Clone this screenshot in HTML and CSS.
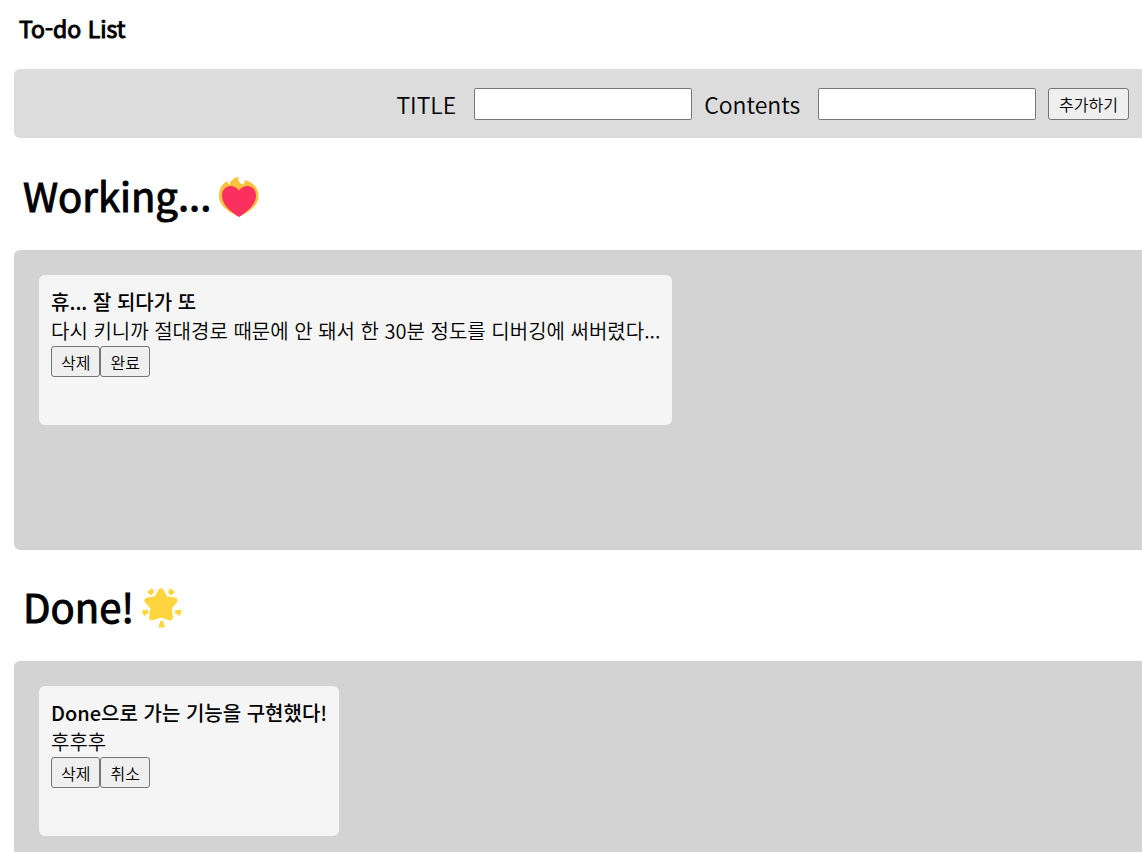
FILE: index.html
```html
<!doctype html>
<html lang="ko">
<head>
    <meta charset="UTF-8">
    <meta name="viewport" content="width=device-width, initial-scale=1.0">
    <link rel="stylesheet" href="styles.css">
    <title>To-do List</title>
</head>
<body>
<header>
    <h1 class="page-title">To-do List</h1>
</header>
<form class="todo-form">
    <label for="title">TITLE</label>
    <input type="text" id="title" name="title">
    <label for="contents">Contents</label>
    <input type="text" id="contents" name="contents">
    <button type="submit" class="add-button">추가하기</button>
</form>
<main>
    <section>
        <h2 class="section-title">
            Working...
            <svg class="emoji" viewBox="0 0 40 40" aria-hidden="true">
                <path fill="#f9c23c" d="M20 39.500C12 36 0 30 0 19C0 11 4 6 8.500 4C8.500 6 9 7 10.500 7.500C11.500 3.500 15 .5 19.500 0C18.500 3.500 20.500 6.500 23.500 7.500C25.500 6.500 26 4.500 25.500 3C33 4.500 39.500 10 39.500 19C39.500 30 28 36 20 39.500Z"/>
                <path fill="#fb305f" d="M20 13.500C22 10.500 25 9 28.500 9C33.500 9 37 13 37 18.500C37 28.500 27 35.500 20 40C13 35.500 3 28.500 3 18.500C3 13 6.500 9 11.500 9C15 9 18 10.500 20 13.500Z"/>
            </svg>
        </h2>
        <div class="todo-list">
            <article class="todo-card">
                <h3>휴... 잘 되다가 또</h3>
                <p>다시 키니까 절대경로 때문에 안 돼서 한 30분 정도를 디버깅에 써버렸다...</p>
                <div class="card-buttons">
                    <button type="button">삭제</button>
                    <button type="button">완료</button>
                </div>
            </article>
        </div>
    </section>
    <section>
        <h2 class="section-title">
            Done!
            <svg class="emoji" viewBox="0 0 40 40" aria-hidden="true">
                <g fill="#ffd53f" stroke="#ffd53f" stroke-linejoin="round">
                    <path stroke-width="6" d="M19 3.500L23 11L32.500 12.500L26.500 19.500L28 29.500L19 26.500L10 29.500L11.500 19.500L5.500 12.500L15 11Z"/>
                    <path stroke-width="1" d="M10 .8L11.500 4.500L9 7L5.500 4ZM28 .8L26.500 4.500L29 7L32.500 4ZM.5 22.500L5.500 22.500L6.500 24.500L2 27.500ZM39 22.500L34 22.500L33 24.500L37.500 27.500ZM19 33H20.500L22.500 39H17Z"/>
                </g>
            </svg>
        </h2>
        <div class="todo-list">
            <article class="todo-card">
                <h3>Done으로 가는 기능을 구현했다!</h3>
                <p>후후후</p>
                <div class="card-buttons">
                    <button type="button">삭제</button>
                    <button type="button">취소</button>
                </div>
            </article>
        </div>
    </section>
</main>
</body>
</html>
```
FILE: styles.css
```css
* {
    box-sizing: border-box;
}

body {
    margin: 0 0 0 14px;
    color: #000;
    font-family: "Noto Sans CJK KR", sans-serif;
    font-size: 20px;
    font-weight: 350;
    line-height: 29px;
}

h1, h2, h3, p {
    margin: 0;
}

h1, h2 {
    font-weight: 400;
    -webkit-text-stroke: 1px #000;
}

.page-title {
    padding: 10px 5px 22px;
    font-size: 23px;
    line-height: 37px;
}

.todo-form {
    display: flex;
    justify-content: flex-end;
    align-items: center;
    margin-bottom: 1px;
    padding: 18px 13px;
    background-color: gainsboro;
    border-radius: 6px 0 0 6px;
    font-size: 23px;
    line-height: 31px;
}

.todo-form label {
    padding-top: 2px;
    margin-right: 18px;
}

.todo-form input {
    width: 218px;
    height: 32px;
    margin-right: 12px;
    border: 1px solid #767676;
    border-radius: 2px;
    background-color: #fff;
}

button {
    height: 31px;
    padding: 0 9px;
    color: #000;
    font-family: inherit;
    font-size: 16px;
    font-weight: inherit;
    line-height: 24px;
    background-color: #efefef;
    border: 1px solid #767676;
    border-radius: 3px;
}

.add-button {
    height: 32px;
    padding: 0 10px;
}

.section-title {
    display: flex;
    align-items: center;
    gap: 8px;
    padding: 26px 9px 25px;
    font-size: 40px;
    line-height: 60px;
}

.emoji {
    width: 40px;
    height: 40px;
    margin-top: 4px;
}

.todo-list {
    display: flex;
    align-items: flex-start;
    min-height: 300px;
    padding: 25px;
    background-color: lightgray;
    border-radius: 6px 0 0 6px;
}

.todo-card {
    min-height: 150px;
    padding: 12px;
    background-color: whitesmoke;
    border-radius: 6px;
}

.todo-card h3 {
    font-size: 20px;
    font-weight: 500;
}

.card-buttons {
    display: flex;
    margin-top: 1px;
}
```
